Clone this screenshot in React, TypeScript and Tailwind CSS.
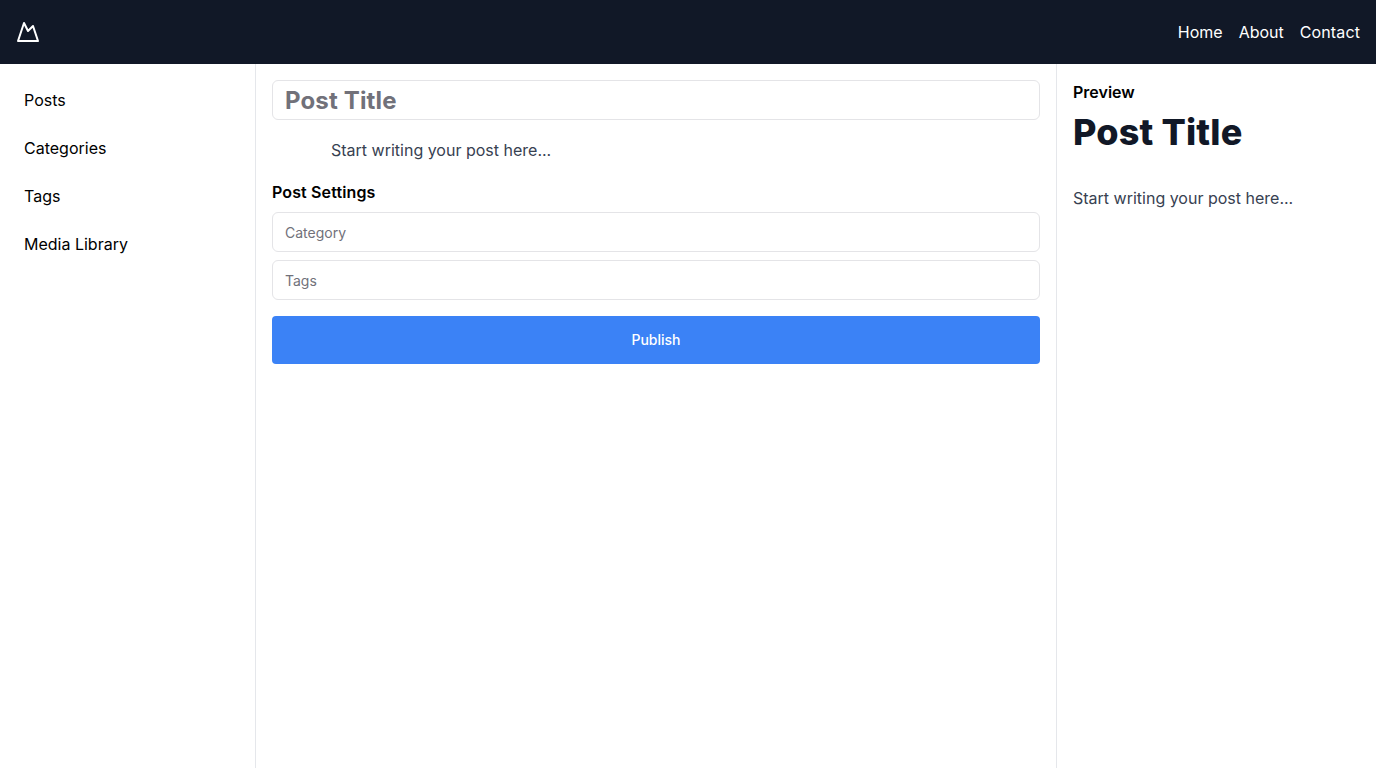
import { Mountain } from "lucide-react";

const navLinks = [
  { label: "Home", className: "" },
  { label: "About", className: "" },
  { label: "Contact", className: "tracking-[0.12px]" },
];
const sections = ["Posts", "Categories", "Tags", "Media Library"];

const fieldBase =
  "flex h-10 w-full rounded-md border border-[#e4e4e7] bg-white px-3 py-2 outline-none placeholder:text-[#71717a]";

export default function App() {
  return (
    <div className="flex h-screen flex-col bg-white font-['Inter',sans-serif] text-black">
      <header className="flex h-16 shrink-0 items-center justify-between bg-[#111827] px-4 text-white">
        <a href="#">
          <Mountain className="h-6 w-6" />
        </a>
        <nav className="flex gap-4">
          {navLinks.map(({ label, className }) => (
            <a key={label} href="#" className={className}>
              {label}
            </a>
          ))}
        </nav>
      </header>
      <div className="flex flex-1">
        <aside className="w-64 border-r border-[#e5e7eb] p-4">
          <nav className="flex flex-col gap-2">
            {sections.map((label) => (
              <a key={label} href="#" className="rounded-md p-2">
                {label}
              </a>
            ))}
          </nav>
        </aside>
        <main className="flex-1 p-4">
          <input
            className={`${fieldBase} mb-4 text-2xl font-bold tracking-[0.15px]`}
            placeholder="Post Title"
          />
          <div className="mx-auto max-w-[650px] text-base leading-7 text-[#374151]">
            <p>Start writing your post here...</p>
          </div>
          <div className="mt-4">
            <h3 className="mb-2 font-semibold tracking-[0.13px]">Post Settings</h3>
            <div className="flex flex-col gap-2">
              <input className={`${fieldBase} text-sm`} placeholder="Category" />
              <input className={`${fieldBase} text-sm`} placeholder="Tags" />
            </div>
          </div>
          <button className="mt-4 h-12 w-full rounded bg-[#3b82f6] text-sm font-medium text-white">
            Publish
          </button>
        </main>
        <aside className="w-80 border-l border-[#e5e7eb] p-4">
          <h3 className="mb-2 font-semibold">Preview</h3>
          <div className="text-[#374151]">
            <h1 className="mb-8 text-4xl leading-10 font-extrabold tracking-[0.15px] text-[#111827]">
              Post Title
            </h1>
            <p className="leading-7">Start writing your post here...</p>
          </div>
        </aside>
      </div>
    </div>
  );
}
